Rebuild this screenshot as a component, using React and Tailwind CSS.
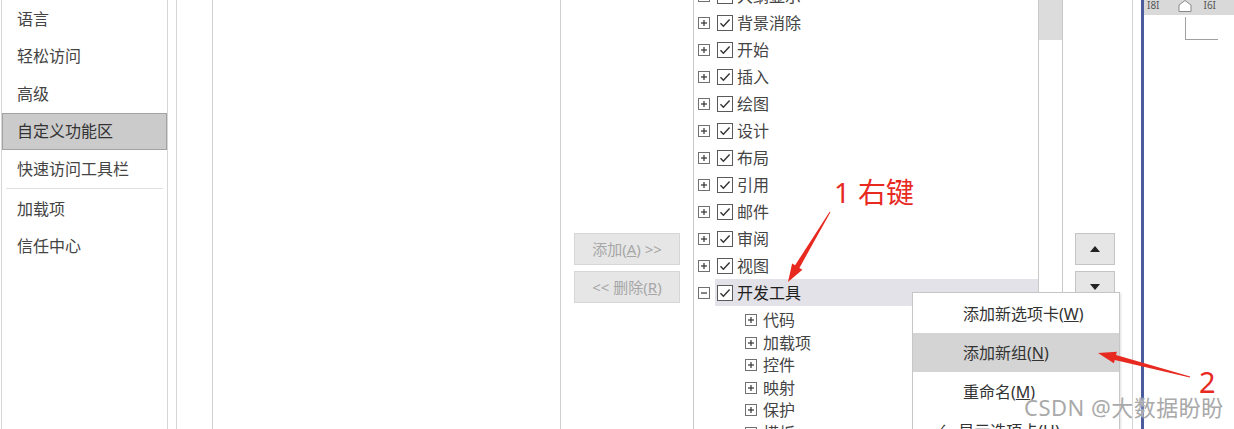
const FONT = "font-['Noto_Sans','Noto_Sans_CJK_SC',sans-serif]";

const sideItems = [
  { label: "语言" },
  { label: "轻松访问" },
  { label: "高级" },
  { label: "自定义功能区", active: true },
  { label: "快速访问工具栏" },
  { sep: true },
  { label: "加载项" },
  { label: "信任中心" },
];

const tabs = [
  "大纲显示",
  "背景消除",
  "开始",
  "插入",
  "绘图",
  "设计",
  "布局",
  "引用",
  "邮件",
  "审阅",
  "视图",
];

const devGroups = ["代码", "加载项", "控件", "映射", "保护", "模板"];

const ExpandBox = ({ open }) => (
  <svg width="12" height="12" viewBox="0 0 12 12" className="shrink-0">
    <rect x="0.5" y="0.5" width="11" height="11" fill="#fff" stroke="#707070" />
    <path d="M3 6h6" stroke="#333" strokeWidth="1.2" />
    {!open && <path d="M6 3v6" stroke="#333" strokeWidth="1.2" />}
  </svg>
);

const CheckBox = () => (
  <svg width="16" height="16" viewBox="0 0 16 16" className="shrink-0">
    <rect x="0.5" y="0.5" width="15" height="15" fill="#fff" stroke="#5a5a5a" />
    <path d="M3.5 8.2 L6.4 11.2 L12.6 4.6" fill="none" stroke="#333" strokeWidth="1.4" />
  </svg>
);

const Tri = ({ up }) => (
  <svg width="10" height="6" viewBox="0 0 10 6">
    <path d={up ? "M0 6 L5 0 L10 6 Z" : "M0 0 L5 6 L10 0 Z"} fill="#222" />
  </svg>
);

const TabRow = ({ label, open, selected }) => (
  <div className="flex items-center h-[27px] shrink-0">
    <div className="ml-[4px]">
      <ExpandBox open={open} />
    </div>
    <div
      className={
        "flex-1 flex items-center h-full ml-[5px] pl-[2px] gap-[4px] " +
        (selected ? "bg-[#e2e2e8] text-[#1e1e1e]" : "")
      }
    >
      <CheckBox />
      <span className="text-[16px] leading-none">{label}</span>
    </div>
  </div>
);

const App = () => {
  return (
    <div className={"relative w-[1234px] h-[429px] overflow-hidden bg-white flex text-[#444] " + FONT}>
      {/* options sidebar */}
      <div className="ml-[1px] w-[167px] shrink-0 h-full border-l border-r border-[#d6d6d6] flex flex-col">
        {sideItems.map((it, i) =>
          it.sep ? (
            <div key={i} className="h-[2.5px] flex items-center px-[4px]">
              <div className="h-px w-full bg-[#e0e0e0]" />
            </div>
          ) : (
            <div
              key={i}
              className={
                "h-[37.5px] shrink-0 flex items-center text-[16px] leading-none " +
                (it.active ? "bg-[#cbcbcb] border border-[#a3a3a3] pl-[14px] text-[#333]" : "pl-[15px]")
              }
            >
              {it.label}
            </div>
          )
        )}
      </div>

      <div className="w-[8px] shrink-0" />
      <div className="w-[36px] shrink-0 h-full border-l border-[#d6d6d6]" />

      {/* commands list (left) */}
      <div className="w-[349px] shrink-0 h-full border-l border-r border-[#d0d0d0]" />

      {/* add / remove */}
      <div className="w-[132px] shrink-0 pl-[13px] pt-[233px] flex flex-col gap-[6px]">
        <button className="w-[106px] h-[32px] bg-[#e6e6e6] border border-[#d6d6d6] text-[#a6a6a6] text-[15px] leading-none">
          添加(<span className="underline">A</span>) &gt;&gt;
        </button>
        <button className="w-[106px] h-[32px] bg-[#e6e6e6] border border-[#d6d6d6] text-[#a6a6a6] text-[15px] leading-none">
          &lt;&lt; 删除(<span className="underline">R</span>)
        </button>
      </div>

      {/* tabs tree (right) */}
      <div className="w-[370px] shrink-0 h-full border-l border-r border-[#c8c8c8] flex">
        <div className="flex-1 overflow-hidden">
          <div className="mt-[-18px] flex flex-col">
            {tabs.map((t) => (
              <TabRow key={t} label={t} />
            ))}
            <TabRow label="开发工具" open selected />
            <div className="flex flex-col mt-[3px]">
              {devGroups.map((g) => (
                <div key={g} className="h-[22.5px] flex items-center pl-[51px] gap-[6px] shrink-0">
                  <ExpandBox />
                  <span className="text-[16px] leading-none">{g}</span>
                </div>
              ))}
            </div>
          </div>
        </div>
        <div className="w-[24px] shrink-0 h-full border-l border-[#c8c8c8] bg-white">
          <div className="h-[40px] bg-[#dcdcdc]" />
        </div>
      </div>

      {/* move up / down */}
      <div className="ml-[12px] w-[40px] shrink-0 pt-[233px] flex flex-col gap-[6px]">
        <button className="h-[32px] bg-[#e6e6e6] border border-[#c4c4c4] flex items-center justify-center">
          <Tri up />
        </button>
        <button className="h-[32px] bg-[#e6e6e6] border border-[#c4c4c4] flex items-center justify-center">
          <Tri />
        </button>
      </div>

      <div className="w-[17px] shrink-0" />
      <div className="w-px shrink-0 h-full bg-[#d4d4d4]" />
      <div className="w-[8px] shrink-0" />
      <div className="w-[3px] shrink-0 h-full bg-[#4a5c9c]" />

      {/* document page behind */}
      <div className="relative flex-1 h-full bg-white">
        <div className="h-[15px] bg-[#d9d9d9] flex items-start text-[10px] leading-none text-[#555] gap-[18px] pl-[3px]">
          <span>I8I</span>
          <span className="ml-[26px]">I6I</span>
          <span>I4</span>
        </div>
        <svg className="absolute left-[34px] top-0" width="14" height="12" viewBox="0 0 14 12">
          <path d="M1 11.5 L1 5 L7 0.5 L13 5 L13 11.5 Z" fill="#fff" stroke="#888" />
        </svg>
        <div className="absolute left-[41px] top-[17px] w-[33px] h-[23px] border-l border-b border-[#a0a0a0]" />
      </div>

      {/* context menu */}
      <div className="absolute left-[912px] top-[292px] w-[208px] h-[160px] bg-white border border-[#c6c6c6] shadow-[1px_1px_2px_rgba(0,0,0,0.12)] pt-[1px] text-[16px] leading-none text-[#333]">
        <div className="h-[39px] flex items-center pl-[50px]">
          添加新选项卡(<span className="underline">W</span>)
        </div>
        <div className="h-[39px] flex items-center pl-[50px] bg-[#d4d4d4]">
          添加新组(<span className="underline">N</span>)
        </div>
        <div className="h-[39px] flex items-center pl-[50px]">
          重命名(<span className="underline">M</span>)
        </div>
        <div className="h-[39px] flex items-center pl-[22px] gap-[13px]">
          <span className="text-[15px]">✓</span>
          <span>
            显示选项卡(<span className="underline">H</span>)
          </span>
        </div>
      </div>

      {/* annotations */}
      <div className="absolute left-[834px] top-[178px] text-[#e8291f] text-[28px] leading-none flex gap-[8px]">
        <span>1</span>
        <span>右键</span>
      </div>
      <div className="absolute left-[1199px] top-[367px] text-[#e8291f] text-[29px] leading-none">2</div>
      <svg className="absolute inset-0 pointer-events-none" width="1234" height="429">
        <polygon
          points="830.4,212.3 799.4,267.9 802.4,269.7 788,282 792.1,263.5 795.1,265.3 829.6,211.7"
          fill="#e8291f"
        />
        <polygon
          points="1190.15,376.4 1116,355.1 1116.9,351.7 1098,353 1113.9,363.3 1114.8,359.9 1189.85,377.6"
          fill="#e8291f"
        />
      </svg>

      {/* watermark */}
      <div className="absolute left-[1024px] top-[396px] text-[22px] leading-none tracking-[0.5px] text-[#a9a9a9] [text-shadow:0_0_2px_#fff]">
        CSDN @大数据盼盼
      </div>
    </div>
  );
};

export default App;
